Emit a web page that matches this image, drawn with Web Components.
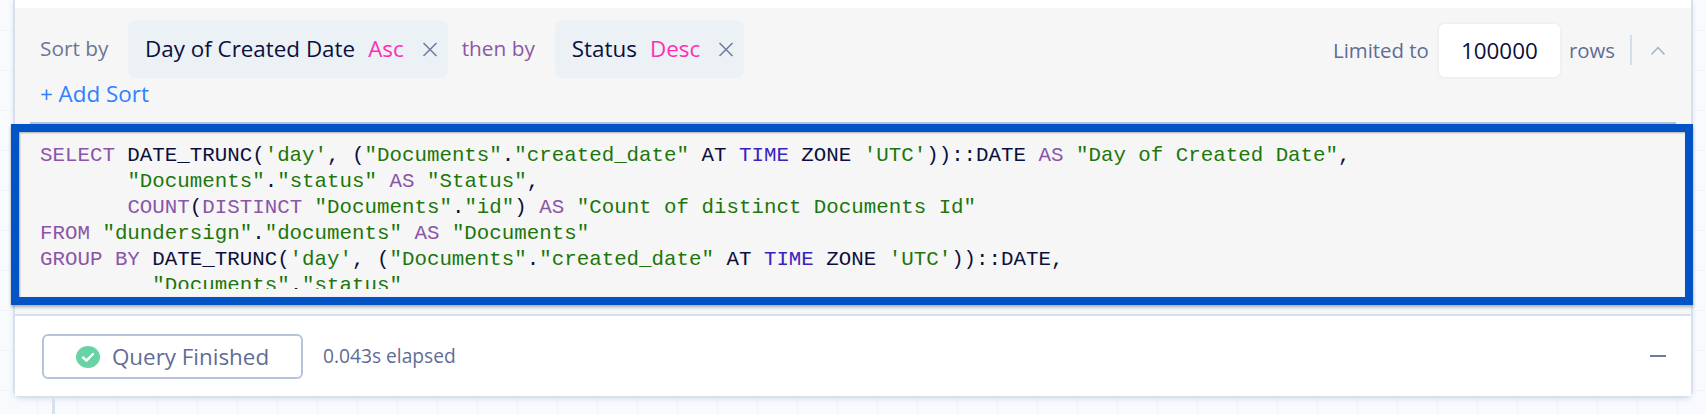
<!DOCTYPE html>
<html lang="en">
<head>
<meta charset="utf-8">
<title>Query</title>
<style>
  html, body { margin: 0; height: 414px; overflow: hidden; }
  body {
    font-family: "Open Sans", "Noto Sans", sans-serif;
    background-color: #f8fafd;
    background-image:
      linear-gradient(#eff4f9 1px, transparent 1px),
      linear-gradient(90deg, #eff4f9 1px, transparent 1px);
    background-size: 40px 40px;
    background-position: 37px 30px;
  }
</style>
</head>
<body>
<query-panel>
  <sort-bar slot="sort">
    <sort-chip field="Day of Created Date" dir="Asc"></sort-chip>
    <span class="then">then by</span>
    <sort-chip field="Status" dir="Desc"></sort-chip>
  </sort-bar>
  <sql-box slot="sql"></sql-box>
  <query-status slot="status"></query-status>
</query-panel>

<script>
// --- sort chip ---
class SortChip extends HTMLElement {
  constructor() { super(); this.attachShadow({ mode: 'open' }); }
  connectedCallback() {
    this.shadowRoot.innerHTML = `
      <style>
        :host { display: flex; align-items: center; height: 58px; padding: 0 10px 2px 17px;
          background: #ebf1f5; border-radius: 8px; font-size: 22.4px; color: #0b0f3c; box-sizing: border-box; }
        .dir { color: #ff2fb3; margin-left: 13px; }
        svg { margin: 2px 0 0 18px; display: block; }
      </style>
      <span>${this.getAttribute('field')}</span>
      <span class="dir">${this.getAttribute('dir')}</span>
      <svg width="16" height="15" viewBox="0 0 16 15" fill="none" stroke="#6e7ba0" stroke-width="1.5"><path d="M1.5 1l13 13M14.5 1l-13 13"/></svg>`;
  }
}
customElements.define('sort-chip', SortChip);

// --- sort bar ---
class SortBar extends HTMLElement {
  constructor() { super(); this.attachShadow({ mode: 'open' }); }
  connectedCallback() {
    this.shadowRoot.innerHTML = `
      <style>
        :host { display: block; height: 114px; padding: 12px 26px 0 25px; box-sizing: border-box;
          font-size: 20.8px; }
        .rows { display: flex; justify-content: space-between; }
        .left, .right { display: flex; align-items: center; height: 58px; }
        .right { color: #5f6c96; padding-top: 2px; box-sizing: border-box; font-size: 20.4px; }
        .label { color: #6a7699; width: 88px; padding-bottom: 2px; }
        ::slotted(.then) { color: #8c57a8; margin: 0 20px 2px 14px; }
        .limit { width: 125px; height: 57px; margin: 0 7px 0 8px; background: #fff; border: 2px solid #eef1f5;
          border-radius: 8px; box-sizing: border-box; display: flex; align-items: center; justify-content: center;
          color: #0b0f3c; font-size: 22.4px; }
        .sep { width: 2px; height: 30px; background: #d3dfec; margin: 0 19px 0 15px; }
        .add { color: #2f80ff; margin-top: 1px; line-height: 30px; font-size: 22.4px; }
      </style>
      <div class="rows">
        <div class="left">
          <span class="label">Sort by</span>
          <slot></slot>
        </div>
        <div class="right">
          <span>Limited to</span>
          <span class="limit">100000</span>
          <span>rows</span>
          <span class="sep"></span>
          <svg width="14" height="9" viewBox="0 0 14 9" fill="none" stroke="#a3aec8" stroke-width="1.5"><path d="M.5 8.5L7 1.5l6.5 7"/></svg>
        </div>
      </div>
      <div class="add">+ Add Sort</div>`;
  }
}
customElements.define('sort-bar', SortBar);

// --- sql box ---
const kw = s => `<span class="k">${s}</span>`;
const st = s => `<span class="s">${s}</span>`;
const tm = s => `<span class="t">${s}</span>`;
const sqlLines = [
  `${kw('SELECT')} DATE_TRUNC(${st("'day'")}, (${st('"Documents"')}.${st('"created_date"')} AT ${tm('TIME')} ZONE ${st("'UTC'")}))::DATE ${kw('AS')} ${st('"Day of Created Date"')},`,
  `       ${st('"Documents"')}.${st('"status"')} ${kw('AS')} ${st('"Status"')},`,
  `       ${kw('COUNT')}(${kw('DISTINCT')} ${st('"Documents"')}.${st('"id"')}) ${kw('AS')} ${st('"Count of distinct Documents Id"')}`,
  `${kw('FROM')} ${st('"dundersign"')}.${st('"documents"')} ${kw('AS')} ${st('"Documents"')}`,
  `${kw('GROUP BY')} DATE_TRUNC(${st("'day'")}, (${st('"Documents"')}.${st('"created_date"')} AT ${tm('TIME')} ZONE ${st("'UTC'")}))::DATE,`,
  `         ${st('"Documents"')}.${st('"status"')}`
];
class SqlBox extends HTMLElement {
  constructor() { super(); this.attachShadow({ mode: 'open' }); }
  connectedCallback() {
    this.shadowRoot.innerHTML = `
      <style>
        :host { display: block; height: 181px; border: 8px solid #0254c6; box-sizing: border-box; margin: 0 -2px 0 -4px;
          background: #f6f6f6; box-shadow: 0 2px 3px rgba(0,0,0,.3), inset 1px 1px 2px rgba(0,0,0,.3); }
        .clip { height: 157px; overflow: hidden; padding: 11px 0 0 21px; box-sizing: border-box; }
        pre { margin: 0; font: 20.8px/25.9px "Liberation Mono", monospace; color: #0b0f3c; }
        .k { color: #8a55a8; }
        .s { color: #1c760c; }
        .t { color: #3a22c0; }
      </style>
      <div class="clip"><pre>${sqlLines.join('\n')}</pre></div>`;
  }
}
customElements.define('sql-box', SqlBox);

// --- status row ---
class QueryStatus extends HTMLElement {
  constructor() { super(); this.attachShadow({ mode: 'open' }); }
  connectedCallback() {
    this.shadowRoot.innerHTML = `
      <style>
        :host { display: flex; align-items: center; height: 82px; padding: 0 25px 0 27px; box-sizing: border-box;
          background: #fff; border-top: 2px solid #d6e1ec; margin-top: 9px; color: #5f6c96; }
        .btn { display: flex; align-items: center; justify-content: center; gap: 12px; width: 261px; height: 45px;
          border: 2px solid #b7c3db; border-radius: 6px; box-sizing: border-box; font-size: 22.4px; margin-top: 1px; }
        .time { margin-left: 20px; font-size: 19.2px; margin-top: -1px; }
        .dash { margin-left: auto; width: 16px; height: 2px; background: #6e7ba0; }
      </style>
      <span class="btn">
        <svg width="24" height="22" viewBox="0 0 24 22"><ellipse cx="12" cy="11" rx="12" ry="11" fill="#69d3a5"/><path d="M7 11.5l3.5 3.2L17 8" fill="none" stroke="#fff" stroke-width="2.4" stroke-linecap="round" stroke-linejoin="round"/></svg>
        <span>Query Finished</span>
      </span>
      <span class="time">0.043s elapsed</span>
      <span class="dash"></span>`;
  }
}
customElements.define('query-status', QueryStatus);

// --- outer card ---
class QueryPanel extends HTMLElement {
  constructor() { super(); this.attachShadow({ mode: 'open' }); }
  connectedCallback() {
    this.shadowRoot.innerHTML = `
      <style>
        :host { display: block; margin: 0 13px; height: 398px; box-sizing: border-box; position: relative; }
        .card { height: 398px; box-sizing: border-box; padding-top: 8px; background: linear-gradient(#fff 8px, #f6f6f6 8px, #f6f6f6 316px, #fff 316px);
          border: solid #d6e1ec; border-width: 0 2px 2px 2px; border-radius: 0 0 8px 8px; box-shadow: 0 2px 4px rgba(190,205,220,.4); }
        .line { height: 2px; background: #b3c1dc; margin: 0 15px; }
        .stem { position: absolute; left: 39px; top: 398px; width: 3px; height: 16px; background: #d6e1ec; }
      </style>
      <div class="card">
        <slot name="sort"></slot>
        <div class="line"></div>
        <slot name="sql"></slot>
        <slot name="status"></slot>
      </div>
      <div class="stem"></div>`;
  }
}
customElements.define('query-panel', QueryPanel);
</script>
</body>
</html>
